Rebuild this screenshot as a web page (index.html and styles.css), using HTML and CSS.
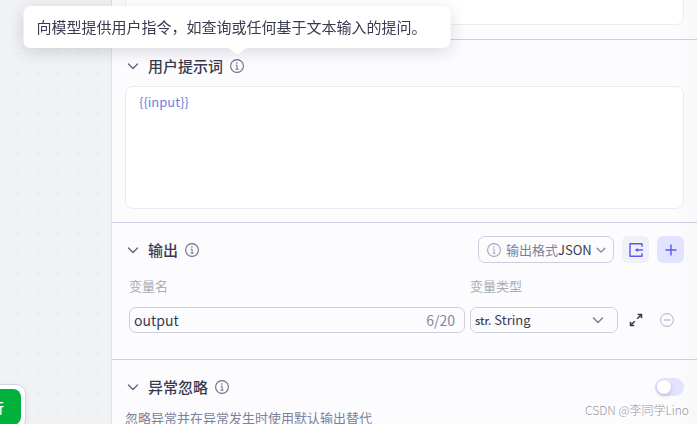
FILE: index.html
```html
<!DOCTYPE html>
<html lang="zh-CN">
<head>
    <meta charset="UTF-8">
    <meta name="viewport" content="width=device-width, initial-scale=1.0">
    <title>大模型节点</title>
    <link rel="stylesheet" href="styles.css">
</head>
<body>
    <!-- Icons shared by the sections -->
    <svg class="sprite" aria-hidden="true">
        <symbol id="chevron" viewBox="0 0 14 14">
            <path d="M2.5 5 7 9.500l4.500-4.500" fill="none" stroke="currentColor" stroke-width="1.500" stroke-linecap="round" stroke-linejoin="round"/>
        </symbol>
        <symbol id="info" viewBox="0 0 14 14">
            <circle cx="7" cy="7" r="6.400" fill="none" stroke="currentColor" stroke-width="1.100"/>
            <circle cx="6.900" cy="4" r="0.800" fill="currentColor"/>
            <path d="M5.700 6.200h1.400v4M5.500 10.200h3.100" fill="none" stroke="currentColor" stroke-width="1"/>
        </symbol>
    </svg>

    <main class="editor">
        <div class="canvas">
            <div class="run-bar">
                <button class="run">试运行</button>
            </div>
        </div>

        <div class="panel">
            <section class="section first">
                <textarea class="prompt cut" aria-label="系统提示词"></textarea>
            </section>

            <section class="section user">
                <div class="section-header">
                    <button class="toggle" aria-label="收起"><svg><use href="#chevron"/></svg></button>
                    <h2><label for="userPrompt">用户提示词</label></h2>
                    <span class="info">
                        <svg><use href="#info"/></svg>
                        <span class="tooltip" role="tooltip">
                            向模型提供用户指令，如查询或任何基于文本输入的提问。
                            <svg class="arrow" viewBox="0 0 24 6"><path d="M0 0c5 0 6 2 8.500 4.500q3.500 3 7 0C18 2 19 0 24 0z" fill="#fff"/></svg>
                        </span>
                    </span>
                </div>
                <textarea class="prompt" id="userPrompt">{{input}}</textarea>
            </section>

            <section class="section output">
                <div class="section-header">
                    <button class="toggle" aria-label="收起"><svg><use href="#chevron"/></svg></button>
                    <h2>输出</h2>
                    <span class="info"><svg><use href="#info"/></svg></span>
                    <div class="actions">
                        <div class="format">
                            <svg class="format-info"><use href="#info"/></svg>
                            <label for="format">输出格式</label>
                            <select id="format">
                                <option>JSON</option>
                            </select>
                            <svg class="arrow-down"><use href="#chevron"/></svg>
                        </div>
                        <button class="square" aria-label="导入">
                            <svg viewBox="0 0 14 14"><path d="M13 3.800V.8H1v12.400h12v-3M13.800 7H7.500" fill="none" stroke="currentColor" stroke-width="1.400" stroke-linejoin="round"/><path d="M5.800 7l3-2v4z" fill="currentColor"/></svg>
                        </button>
                        <button class="square add" aria-label="添加">
                            <svg viewBox="0 0 14 14"><path d="M7 2v10M2 7h10" fill="none" stroke="currentColor" stroke-width="1.400" stroke-linecap="round"/></svg>
                        </button>
                    </div>
                </div>
                <div class="variables">
                    <label for="varName">变量名</label>
                    <label class="type-label" for="varType">变量类型</label>
                    <div class="field">
                        <input type="text" id="varName" value="output" maxlength="20">
                        <span class="count">6/20</span>
                    </div>
                    <div class="field">
                        <span class="str">str.</span>
                        <select id="varType">
                            <option>String</option>
                        </select>
                        <svg class="arrow-down"><use href="#chevron"/></svg>
                    </div>
                    <button class="row-button" aria-label="展开">
                        <svg viewBox="0 0 14 14"><path d="M8.200 5.800 12 2M8.700 1.500h3.800v3.800M5.800 8.200 2 12M1.500 8.700v3.800h3.800" fill="none" stroke="currentColor" stroke-width="1.500"/></svg>
                    </button>
                    <button class="row-button remove" aria-label="删除">
                        <svg viewBox="0 0 14 14"><circle cx="7" cy="7" r="6.400" fill="none" stroke="currentColor"/><path d="M4 7h6" stroke="currentColor" stroke-width="1.200"/></svg>
                    </button>
                </div>
            </section>

            <section class="section">
                <div class="section-header">
                    <button class="toggle" aria-label="收起"><svg><use href="#chevron"/></svg></button>
                    <h2><label for="ignoreError">异常忽略</label></h2>
                    <span class="info"><svg><use href="#info"/></svg></span>
                    <div class="actions">
                        <input class="switch" type="checkbox" id="ignoreError">
                    </div>
                </div>
                <p class="hint">忽略异常并在异常发生时使用默认输出替代</p>
            </section>
        </div>
        <div class="watermark">CSDN @李同学Lino</div>
    </main>
</body>
</html>
```

FILE: styles.css
```css
* {
    box-sizing: border-box;
}
body {
    margin: 0;
    font-family: "Noto Sans CJK SC", "Noto Sans", sans-serif;
    font-size: 14px;
    line-height: 20px;
    color: #383b4f;
}
button, input, select, textarea {
    font: inherit;
    color: inherit;
    margin: 0;
    padding: 0;
    border: none;
    background: none;
    outline: none;
}
button {
    display: flex;
    align-items: center;
    justify-content: center;
    cursor: pointer;
}
svg {
    display: block;
    width: 14px;
    height: 14px;
    flex-shrink: 0;
}
.sprite {
    position: absolute;
    width: 0;
    height: 0;
}
.editor {
    position: relative;
    display: flex;
    height: 100vh;
    overflow: hidden;
}

/* Canvas on the left */
.canvas {
    position: relative;
    width: 112px;
    flex-shrink: 0;
    background-color: #f1f2f4;
    background-image: radial-gradient(circle, #ebecef 1px, transparent 2px);
    background-size: 20px 20px;
    background-position: 8px 3px;
    border-right: 1px solid #dfe1ea;
}
.run-bar {
    position: absolute;
    right: 85px;
    bottom: -6px;
    padding: 4px;
    background: #fff;
    border: 1px solid #d0d3e6;
    border-radius: 10px;
    box-shadow: 0 2px 6px rgba(40, 44, 80, 0.08);
}
.run {
    height: 36px;
    padding: 0 17px;
    border-radius: 8px;
    background: #00b23c;
    color: #fff;
    font-weight: 500;
    white-space: nowrap;
}

/* Settings panel */
.panel {
    flex: 1;
    min-width: 0;
    background: linear-gradient(to left, #f7f7f9, #fcfcff 20px);
}
.section {
    padding: 13px;
    border-top: 1px solid #cccee0;
}
.section.first {
    padding: 0 13px 14px;
    border-top: none;
}
.section.user {
    padding-top: 12px;
}
.section.output {
    padding-bottom: 26px;
}
.section-header {
    display: flex;
    align-items: center;
    height: 27px;
}
.section-header h2 {
    margin: 0 7px 0 8px;
    font-size: 15px;
    font-weight: 500;
}
.toggle {
    width: 15px;
    color: #686d8a;
}
.info {
    position: relative;
    color: #686d8a;
}
.prompt {
    display: block;
    width: 100%;
    height: 123px;
    margin-top: 7px;
    padding: 5px 13px;
    background: #fff;
    border: 1px solid #ececf0;
    border-radius: 8px;
    font-size: 13px;
    color: #6f7fe0;
    resize: none;
}
.prompt.cut {
    height: 25px;
    margin-top: 0;
    border-top: none;
    border-radius: 0 0 8px 8px;
}

/* Tooltip over the info icon */
.tooltip {
    position: absolute;
    z-index: 1;
    bottom: 25px;
    left: 50%;
    width: 427px;
    transform: translateX(-50%);
    padding: 11px 13px;
    border-radius: 7px;
    background: #fff;
    box-shadow: 0 4px 16px rgba(30, 34, 60, 0.16);
    color: #383b4f;
    font-size: 15px;
    white-space: nowrap;
}
.tooltip .arrow {
    position: absolute;
    top: 100%;
    left: 50%;
    width: 24px;
    height: 6px;
    margin-left: -12px;
}

/* Output section */
.actions {
    display: flex;
    gap: 8px;
    margin-left: auto;
}
.format {
    display: flex;
    align-items: center;
    width: 136px;
    height: 27px;
    padding: 0 6px 0 8px;
    border: 1px solid #cccee0;
    border-radius: 7px;
}
.format label {
    margin-left: 5px;
    font-size: 13px;
    color: #7c8099;
    white-space: nowrap;
}
.format-info {
    color: #a3a6bd;
}
select {
    flex: 1;
    min-width: 0;
    appearance: none;
    font-size: 13px;
}
.arrow-down {
    width: 12px;
    height: 12px;
    color: #7c8099;
    pointer-events: none;
}
.square {
    width: 27px;
    height: 27px;
    border-radius: 6px;
    background: #f0f1f8;
    color: #5a55f5;
}
.square.add {
    background: #e2e3ff;
}
.variables {
    display: grid;
    grid-template-columns: 1fr 148px 26px 26px;
    column-gap: 5px;
    row-gap: 11px;
    padding: 13px 4px 0;
}
.variables label {
    font-size: 13px;
    color: #aaacb4;
}
.variables .type-label {
    grid-column: 2 / 5;
}
.field {
    display: flex;
    align-items: center;
    height: 26px;
    min-width: 0;
    padding: 0 9px 0 4px;
    border: 1px solid #cccee0;
    border-radius: 7px;
}
.field input {
    flex: 1;
    min-width: 0;
}
.field .arrow-down {
    width: 14px;
    height: 14px;
    margin-right: 3px;
}
.count {
    color: #85889c;
}
.str {
    margin-right: 3px;
    font-size: 11px;
    font-weight: 500;
}
.row-button.remove {
    color: #aeb1c8;
}

/* Error section */
.switch {
    appearance: none;
    width: 29px;
    height: 18px;
    padding: 2px;
    border-radius: 9px;
    background: #e2e3ff;
    cursor: pointer;
}
.switch::before {
    content: "";
    display: block;
    width: 14px;
    height: 14px;
    border-radius: 50%;
    background: #fff;
    box-shadow: 0 2px 4px rgba(30, 34, 60, 0.2);
}
.switch:checked {
    background: #5a55f5;
}
.switch:checked::before {
    margin-left: auto;
}
.hint {
    margin: 8px 0 0;
    font-size: 13px;
    color: #7c8099;
}
.watermark {
    position: absolute;
    right: 8px;
    bottom: 4px;
    font-size: 12px;
    font-weight: 300;
    color: #98989c;
    text-shadow: 1px 1px 0 #fff;
}
```
